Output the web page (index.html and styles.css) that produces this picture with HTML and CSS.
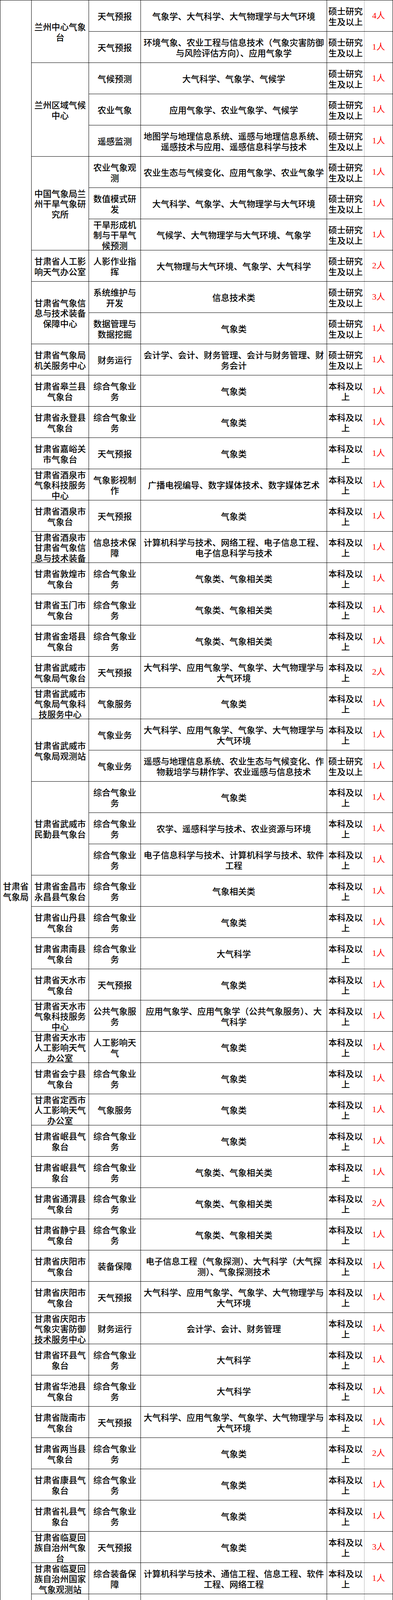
FILE: index.html
```html
<!DOCTYPE html>
<html lang="zh-CN">
<head>
<meta charset="utf-8">
<title>甘肃省气象局 招聘岗位</title>
<link rel="stylesheet" href="styles.css">
</head>
<body>
<div class="sheet">
  <div class="cell bureau">甘肃省气象局</div>

  <div class="cell unit rows-2">兰州中心气象台</div>
  <div class="cell post">天气预报</div>
  <div class="cell major">气象学、大气科学、大气物理学与大气环境</div>
  <div class="cell edu">硕士研究生及以上</div>
  <div class="cell num">4人</div>

  <div class="cell post">天气预报</div>
  <div class="cell major">环境气象、农业工程与信息技术（气象灾害防御与风险评估方向）、应用气象学</div>
  <div class="cell edu">硕士研究生及以上</div>
  <div class="cell num">1人</div>

  <div class="cell unit rows-3">兰州区域气候中心</div>
  <div class="cell post">气候预测</div>
  <div class="cell major">大气科学、气象学、气候学</div>
  <div class="cell edu">硕士研究生及以上</div>
  <div class="cell num">1人</div>

  <div class="cell post">农业气象</div>
  <div class="cell major">应用气象学、农业气象学、气候学</div>
  <div class="cell edu">硕士研究生及以上</div>
  <div class="cell num">1人</div>

  <div class="cell post">遥感监测</div>
  <div class="cell major">地图学与地理信息系统、遥感与地理信息系统、遥感技术与应用、遥感信息科学与技术</div>
  <div class="cell edu">硕士研究生及以上</div>
  <div class="cell num">1人</div>

  <div class="cell unit rows-3">中国气象局兰州干旱气象研究所</div>
  <div class="cell post">农业气象观测</div>
  <div class="cell major">农业生态与气候变化、应用气象学、农业气象学</div>
  <div class="cell edu">硕士研究生及以上</div>
  <div class="cell num">1人</div>

  <div class="cell post">数值模式研发</div>
  <div class="cell major">大气科学、气象学、大气物理学与大气环境</div>
  <div class="cell edu">硕士研究生及以上</div>
  <div class="cell num">1人</div>

  <div class="cell post">干旱形成机制与干旱气候预测</div>
  <div class="cell major">气候学、大气物理学与大气环境、气象学</div>
  <div class="cell edu">硕士研究生及以上</div>
  <div class="cell num">1人</div>

  <div class="cell unit">甘肃省人工影响天气办公室</div>
  <div class="cell post">人影作业指挥</div>
  <div class="cell major">大气物理与大气环境、气象学、大气科学</div>
  <div class="cell edu">硕士研究生及以上</div>
  <div class="cell num">2人</div>

  <div class="cell unit rows-2">甘肃省气象信息与技术装备保障中心</div>
  <div class="cell post">系统维护与开发</div>
  <div class="cell major">信息技术类</div>
  <div class="cell edu">硕士研究生及以上</div>
  <div class="cell num">3人</div>

  <div class="cell post">数据管理与数据挖掘</div>
  <div class="cell major">气象类</div>
  <div class="cell edu">硕士研究生及以上</div>
  <div class="cell num">1人</div>

  <div class="cell unit">甘肃省气象局机关服务中心</div>
  <div class="cell post">财务运行</div>
  <div class="cell major">会计学、会计、财务管理、会计与财务管理、财务会计</div>
  <div class="cell edu">硕士研究生及以上</div>
  <div class="cell num">1人</div>

  <div class="cell unit">甘肃省皋兰县气象台</div>
  <div class="cell post">综合气象业务</div>
  <div class="cell major">气象类</div>
  <div class="cell edu">本科及以上</div>
  <div class="cell num">1人</div>

  <div class="cell unit">甘肃省永登县气象台</div>
  <div class="cell post">综合气象业务</div>
  <div class="cell major">气象类</div>
  <div class="cell edu">本科及以上</div>
  <div class="cell num">1人</div>

  <div class="cell unit">甘肃省嘉峪关市气象台</div>
  <div class="cell post">天气预报</div>
  <div class="cell major">气象类</div>
  <div class="cell edu">本科及以上</div>
  <div class="cell num">1人</div>

  <div class="cell unit">甘肃省酒泉市气象科技服务中心</div>
  <div class="cell post">气象影视制作</div>
  <div class="cell major">广播电视编导、数字媒体技术、数字媒体艺术</div>
  <div class="cell edu">本科及以上</div>
  <div class="cell num">1人</div>

  <div class="cell unit">甘肃省酒泉市气象台</div>
  <div class="cell post">天气预报</div>
  <div class="cell major">气象类</div>
  <div class="cell edu">本科及以上</div>
  <div class="cell num">1人</div>

  <div class="cell unit">甘肃省酒泉市甘肃省气象信息与技术装备</div>
  <div class="cell post">信息技术保障</div>
  <div class="cell major">计算机科学与技术、网络工程、电子信息工程、电子信息科学与技术</div>
  <div class="cell edu">本科及以上</div>
  <div class="cell num">1人</div>

  <div class="cell unit">甘肃省敦煌市气象台</div>
  <div class="cell post">综合气象业务</div>
  <div class="cell major">气象类、气象相关类</div>
  <div class="cell edu">本科及以上</div>
  <div class="cell num">1人</div>

  <div class="cell unit">甘肃省玉门市气象台</div>
  <div class="cell post">综合气象业务</div>
  <div class="cell major">气象类、气象相关类</div>
  <div class="cell edu">本科及以上</div>
  <div class="cell num">1人</div>

  <div class="cell unit">甘肃省金塔县气象台</div>
  <div class="cell post">综合气象业务</div>
  <div class="cell major">气象类、气象相关类</div>
  <div class="cell edu">本科及以上</div>
  <div class="cell num">1人</div>

  <div class="cell unit">甘肃省武威市气象局气象台</div>
  <div class="cell post">天气预报</div>
  <div class="cell major">大气科学、应用气象学、气象学、大气物理学与大气环境</div>
  <div class="cell edu">本科及以上</div>
  <div class="cell num">2人</div>

  <div class="cell unit">甘肃省武威市气象局气象科技服务中心</div>
  <div class="cell post">气象服务</div>
  <div class="cell major">气象类</div>
  <div class="cell edu">本科及以上</div>
  <div class="cell num">1人</div>

  <div class="cell unit rows-2">甘肃省武威市气象局观测站</div>
  <div class="cell post">气象业务</div>
  <div class="cell major">大气科学、应用气象学、气象学、大气物理学与大气环境</div>
  <div class="cell edu">本科及以上</div>
  <div class="cell num">1人</div>

  <div class="cell post">气象业务</div>
  <div class="cell major">遥感与地理信息系统、农业生态与气候变化、作物栽培学与耕作学、农业遥感与信息技术</div>
  <div class="cell edu">硕士研究生及以上</div>
  <div class="cell num">1人</div>

  <div class="cell unit rows-3">甘肃省武威市民勤县气象台</div>
  <div class="cell post">综合气象业务</div>
  <div class="cell major">气象类</div>
  <div class="cell edu">本科及以上</div>
  <div class="cell num">1人</div>

  <div class="cell post">综合气象业务</div>
  <div class="cell major">农学、遥感科学与技术、农业资源与环境</div>
  <div class="cell edu">本科及以上</div>
  <div class="cell num">1人</div>

  <div class="cell post">综合气象业务</div>
  <div class="cell major">电子信息科学与技术、计算机科学与技术、软件工程</div>
  <div class="cell edu">本科及以上</div>
  <div class="cell num">1人</div>

  <div class="cell unit">甘肃省金昌市永昌县气象台</div>
  <div class="cell post">综合气象业务</div>
  <div class="cell major">气象相关类</div>
  <div class="cell edu">本科及以上</div>
  <div class="cell num">1人</div>

  <div class="cell unit">甘肃省山丹县气象台</div>
  <div class="cell post">综合气象业务</div>
  <div class="cell major">气象类</div>
  <div class="cell edu">本科及以上</div>
  <div class="cell num">1人</div>

  <div class="cell unit">甘肃省肃南县气象台</div>
  <div class="cell post">综合气象业务</div>
  <div class="cell major">大气科学</div>
  <div class="cell edu">本科及以上</div>
  <div class="cell num">1人</div>

  <div class="cell unit">甘肃省天水市气象台</div>
  <div class="cell post">天气预报</div>
  <div class="cell major">气象类</div>
  <div class="cell edu">本科及以上</div>
  <div class="cell num">1人</div>

  <div class="cell unit">甘肃省天水市气象科技服务中心</div>
  <div class="cell post">公共气象服务</div>
  <div class="cell major">应用气象学、应用气象学（公共气象服务）、大气科学</div>
  <div class="cell edu">本科及以上</div>
  <div class="cell num">1人</div>

  <div class="cell unit">甘肃省天水市人工影响天气办公室</div>
  <div class="cell post">人工影响天气</div>
  <div class="cell major">气象类</div>
  <div class="cell edu">本科及以上</div>
  <div class="cell num">1人</div>

  <div class="cell unit">甘肃省会宁县气象台</div>
  <div class="cell post">综合气象业务</div>
  <div class="cell major">气象类</div>
  <div class="cell edu">本科及以上</div>
  <div class="cell num">1人</div>

  <div class="cell unit">甘肃省定西市人工影响天气办公室</div>
  <div class="cell post">气象服务</div>
  <div class="cell major">气象类</div>
  <div class="cell edu">本科及以上</div>
  <div class="cell num">1人</div>

  <div class="cell unit">甘肃省岷县气象台</div>
  <div class="cell post">综合气象业务</div>
  <div class="cell major">气象类</div>
  <div class="cell edu">本科及以上</div>
  <div class="cell num">1人</div>

  <div class="cell unit">甘肃省岷县气象台</div>
  <div class="cell post">综合气象业务</div>
  <div class="cell major">气象类、气象相关类</div>
  <div class="cell edu">本科及以上</div>
  <div class="cell num">1人</div>

  <div class="cell unit">甘肃省通渭县气象台</div>
  <div class="cell post">综合气象业务</div>
  <div class="cell major">气象类、气象相关类</div>
  <div class="cell edu">本科及以上</div>
  <div class="cell num">2人</div>

  <div class="cell unit">甘肃省静宁县气象台</div>
  <div class="cell post">综合气象业务</div>
  <div class="cell major">气象类、气象相关类</div>
  <div class="cell edu">本科及以上</div>
  <div class="cell num">1人</div>

  <div class="cell unit">甘肃省庆阳市气象台</div>
  <div class="cell post">装备保障</div>
  <div class="cell major">电子信息工程（气象探测）、大气科学（大气探测）、气象探测技术</div>
  <div class="cell edu">本科及以上</div>
  <div class="cell num">1人</div>

  <div class="cell unit">甘肃省庆阳市气象台</div>
  <div class="cell post">天气预报</div>
  <div class="cell major">大气科学、应用气象学、气象学、大气物理学与大气环境</div>
  <div class="cell edu">本科及以上</div>
  <div class="cell num">1人</div>

  <div class="cell unit">甘肃省庆阳市气象灾害防御技术服务中心</div>
  <div class="cell post">财务运行</div>
  <div class="cell major">会计学、会计、财务管理</div>
  <div class="cell edu">本科及以上</div>
  <div class="cell num">1人</div>

  <div class="cell unit">甘肃省环县气象台</div>
  <div class="cell post">综合气象业务</div>
  <div class="cell major">大气科学</div>
  <div class="cell edu">本科及以上</div>
  <div class="cell num">1人</div>

  <div class="cell unit">甘肃省华池县气象台</div>
  <div class="cell post">综合气象业务</div>
  <div class="cell major">大气科学</div>
  <div class="cell edu">本科及以上</div>
  <div class="cell num">1人</div>

  <div class="cell unit">甘肃省陇南市气象台</div>
  <div class="cell post">天气预报</div>
  <div class="cell major">大气科学、应用气象学、气象学、大气物理学与大气环境</div>
  <div class="cell edu">本科及以上</div>
  <div class="cell num">1人</div>

  <div class="cell unit">甘肃省两当县气象台</div>
  <div class="cell post">综合气象业务</div>
  <div class="cell major">气象类</div>
  <div class="cell edu">本科及以上</div>
  <div class="cell num">2人</div>

  <div class="cell unit">甘肃省康县气象台</div>
  <div class="cell post">综合气象业务</div>
  <div class="cell major">气象类</div>
  <div class="cell edu">本科及以上</div>
  <div class="cell num">1人</div>

  <div class="cell unit">甘肃省礼县气象台</div>
  <div class="cell post">综合气象业务</div>
  <div class="cell major">气象类</div>
  <div class="cell edu">本科及以上</div>
  <div class="cell num">1人</div>

  <div class="cell unit">甘肃省临夏回族自治州气象台</div>
  <div class="cell post">天气预报</div>
  <div class="cell major">气象类</div>
  <div class="cell edu">本科及以上</div>
  <div class="cell num">3人</div>

  <div class="cell unit">甘肃省临夏回族自治州国家气象观测站</div>
  <div class="cell post">综合装备保障</div>
  <div class="cell major">计算机科学与技术、通信工程、信息工程、软件工程、网络工程</div>
  <div class="cell edu">本科及以上</div>
  <div class="cell num">1人</div>

  <div class="cell unit">甘南藏族自治州气象台</div>
  <div class="cell post">天气预报</div>
  <div class="cell major">气象类</div>
  <div class="cell edu">本科及以上</div>
  <div class="cell num">2人</div>

  <div class="cell unit">甘南藏族自治州气象台</div>
  <div class="cell post">雷达业务保障</div>
  <div class="cell major">信息技术类</div>
  <div class="cell edu">本科及以上</div>
  <div class="cell num">1人</div>

  <div class="cell unit">合作市气象台</div>
  <div class="cell post">综合气象业务</div>
  <div class="cell major">气象类或气象相关类</div>
  <div class="cell edu">本科及以上</div>
  <div class="cell num">1人</div>

  <div class="cell unit">卓尼县气象台</div>
  <div class="cell post">综合气象业务</div>
  <div class="cell major">大气科学</div>
  <div class="cell edu">本科及以上</div>
  <div class="cell num">1人</div>

  <div class="cell unit">玛曲县气象台</div>
  <div class="cell post">综合气象业务</div>
  <div class="cell major">气象类或气象相关类</div>
  <div class="cell edu">本科及以上</div>
  <div class="cell num">2人</div>

  <div class="cell total-label">合计</div>
  <div class="cell num total-num">69人</div>
</div>
</body>
</html>
```
FILE: styles.css
```css
html, body {
  margin: 0;
  padding: 0;
  background: #ffffff;
}

.sheet {
  display: grid;
  grid-template-columns: 79px 146px 132px 476px 95px 72px;
  grid-auto-rows: 79px;
  gap: 1px;
  padding: 1px;
  width: 1007px;
  box-sizing: border-box;
  background: #000000;
  font-family: "Noto Sans CJK SC", sans-serif;
  font-size: 22px;
  font-weight: 500;
  line-height: 26.5px;
  color: #000000;
}

.cell {
  background: #ffffff;
  display: flex;
  align-items: center;
  justify-content: center;
  text-align: center;
  padding: 0 6px;
  min-width: 0;
}

.bureau {
  grid-column: 1;
  grid-row: 1 / span 57;
  padding: 0 5px;
}

.rows-2 { grid-row: span 2; }
.rows-3 { grid-row: span 3; }

.unit { padding: 0 6px; }
.post { padding: 0 8px; }
.major { padding: 0 6px; }
.edu { padding: 0 3px; }

.num {
  padding: 0 2px;
  color: #ff0000;
  font-family: "Liberation Serif", "Noto Sans CJK SC", serif;
  font-weight: 400;
  white-space: nowrap;
  box-shadow: -1px 0 0 #b4b4b4;
}

.total-label {
  grid-column: span 4;
  position: relative;
}

.total-label::before {
  content: "";
  position: absolute;
  left: 0;
  top: 0;
  border-top: 5px solid #1f8a2a;
  border-right: 5px solid transparent;
}
```
